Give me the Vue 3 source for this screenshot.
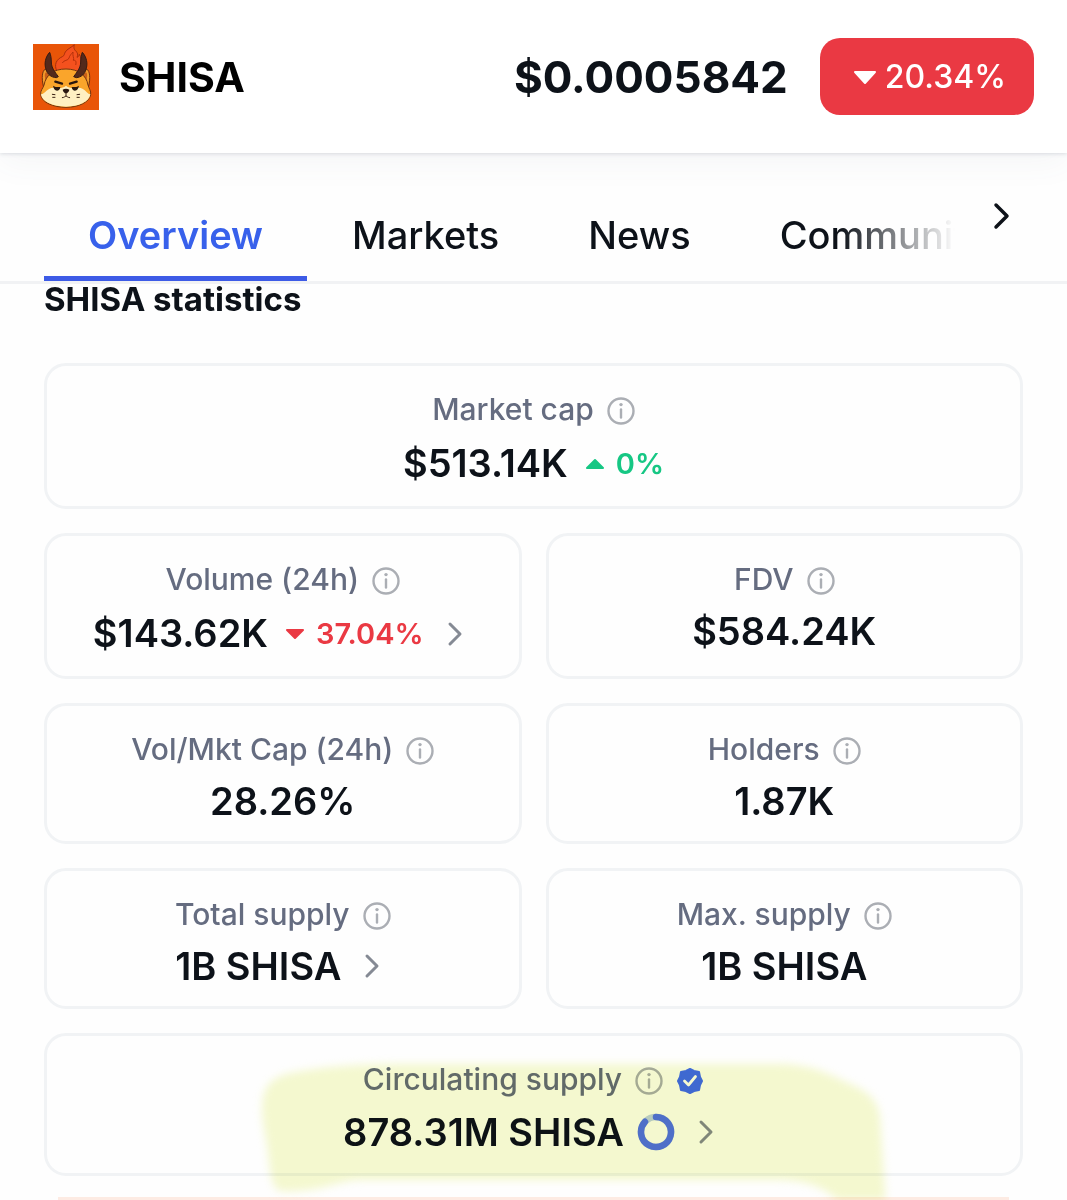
<script setup>
import { ref } from 'vue';

const activeTab = ref('Overview');

const tabs = ['Overview', 'Markets', 'News', 'Community'];

const stats = ref([
  { label: 'Market cap', value: '$513.14K', trend: 'up', change: '0%', wide: true },
  { label: 'Volume (24h)', value: '$143.62K', trend: 'down', change: '37.04%', more: true },
  { label: 'FDV', value: '$584.24K' },
  { label: 'Vol/Mkt Cap (24h)', value: '28.26%' },
  { label: 'Holders', value: '1.87K' },
  { label: 'Total supply', value: '1B SHISA', more: true },
  { label: 'Max. supply', value: '1B SHISA' },
  { label: 'Circulating supply', value: '878.31M SHISA', wide: true, verified: true, ring: true, marked: true, more: true }
]);

const selectTab = (tab) => {
  activeTab.value = tab;
};
</script>

<template>
  <div class="page">
    <header class="coin-header">
      <svg class="coin-logo" viewBox="0 0 198 198" aria-hidden="true">
        <rect width="198" height="198" fill="#e95508" />
        <path d="M72 82C62 62 70 46 88 38c8-4 5-9 9-14 4-8 16-12 27-22-4 12 2 17 8 23 4 7 1 11 0 15 5-2 6-5 7-9 10 17 8 36-1 54z" fill="#f4511e" stroke="#a92d0c" stroke-width="3" />
        <path d="M88 57c4-10 18-6 20-15 2-8 7-12 12-18-2 12 4 17 1 25 9-2 9 7 7 14" fill="none" stroke="#b5310b" stroke-width="3" />
        <path d="M31 126c-6-24-3-46 5-50 10-1 17 10 23 17zM167 126c6-24 3-46-5-50-10-1-17 10-23 17z" fill="#f39a2c" stroke="#70330f" stroke-width="3" />
        <path d="M38 110c-4-15-3-22 1-25 5 2 9 8 13 13zM160 110c4-15 3-22-1-25-5 2-9 8-13 13z" fill="#c95f18" />
        <path d="M99 75c36 0 61 18 66 48 2 10 10 17 8 29-4 23-37 38-74 38s-73-14-76-38c-2-12 8-20 10-29 6-31 29-48 66-48z" fill="#faa52b" stroke="#70330f" stroke-width="3" />
        <path d="M24 151c14-2 18-20 38-20 16 0 24 4 37-6 13 10 21 6 37 6 20 0 24 18 36 20-3 23-36 37-73 37s-72-14-75-37z" fill="#fff0c2" />
        <path d="M76 98C66 84 55 72 55 54c0-12-2-22-5-29-13 14-17 34-11 51 4 15 15 24 31 25zM122 98c10-14 21-26 21-44 0-12 2-22 5-29 13 14 17 34 11 51-4 15-15 24-29 25z" fill="#53291b" stroke="#351a13" stroke-width="3" />
        <path d="M67 113l20 6M131 113l-20 6" stroke="#29170f" stroke-width="7" stroke-linecap="round" />
        <path d="M60 125c8 5 15 4 22 4-1 8-5 11-10 11-7 0-10-7-12-15zM138 125c-8 5-15 4-22 4 1 8 5 11 10 11 7 0 10-7 12-15z" fill="#28180f" />
        <path d="M89 137c6-4 14-4 20 0-1 6-6 11-10 11s-9-5-10-11z" fill="#29170f" />
        <path d="M99 147v10M88 161c5 0 8-4 11-5 3 1 6 5 11 5M58 151l8 1M59 160h7M132 152l8-1M132 160h7" fill="none" stroke="#3a2013" stroke-width="3" stroke-linecap="round" />
      </svg>
      <h1 class="coin-name">SHISA</h1>
      <span class="coin-price">$0.0005842</span>
      <span class="change-badge">
        <svg width="24" height="16" viewBox="0 0 24 16" aria-hidden="true">
          <path d="M2 3h20L12 14z" fill="currentColor" stroke="currentColor" stroke-width="2" stroke-linejoin="round" />
        </svg>
        20.34%
      </span>
    </header>

    <nav class="tab-bar">
      <div class="tab-scroll">
        <button
          v-for="tab in tabs"
          :key="tab"
          type="button"
          class="tab"
          :class="{ active: activeTab === tab }"
          @click="selectTab(tab)"
        >
          {{ tab }}
        </button>
      </div>
      <button type="button" class="tab-next" aria-label="Next">
        <svg width="36" height="36" viewBox="0 0 36 36" fill="none" stroke="currentColor" stroke-width="3.500" stroke-linecap="round" stroke-linejoin="round">
          <path d="M13 7l11 11-11 11"></path>
        </svg>
      </button>
    </nav>

    <main class="content">
      <h2 class="section-title">SHISA statistics</h2>

      <div class="stats-grid">
        <section
          v-for="item in stats"
          :key="item.label"
          class="stat-card"
          :class="{ wide: item.wide }"
        >
          <div class="stat-label">
            <span>{{ item.label }}</span>
            <button type="button" class="icon-button info" :aria-label="item.label">
              <svg width="28" height="28" viewBox="0 0 28 28" fill="none" stroke="currentColor" stroke-width="2.400">
                <circle cx="14" cy="14" r="12.5"></circle>
                <path d="M14 12.5v8" stroke-linecap="round"></path>
                <circle cx="14" cy="7.6" r="1.7" fill="currentColor" stroke="none"></circle>
              </svg>
            </button>
            <svg v-if="item.verified" class="verified" width="28" height="28" viewBox="0 0 28 28" aria-hidden="true">
              <path d="M14 2l4 2 5 1 1 5 2 4-2 4-1 5-5 1-4 2-4-2-5-1-1-5-2-4 2-4 1-5 5-1z" fill="currentColor" stroke="currentColor" stroke-width="2" stroke-linejoin="round" />
              <path d="M8.500 14l4 4 7-8.500" fill="none" stroke="#fff" stroke-width="2.800" stroke-linecap="round" stroke-linejoin="round" />
            </svg>
          </div>

          <div class="stat-value" :class="{ 'with-trend': item.trend, 'with-ring': item.ring }">
            <span>{{ item.value }}</span>
            <span v-if="item.trend" class="trend" :class="item.trend">
              <svg width="20" height="12" viewBox="0 0 20 12" aria-hidden="true">
                <path :d="item.trend === 'up' ? 'M2 10h16l-8-8z' : 'M2 2h16l-8 8z'" fill="currentColor" stroke="currentColor" stroke-width="2" stroke-linejoin="round" />
              </svg>
              {{ item.change }}
            </span>
            <svg v-if="item.ring" class="ring" width="38" height="38" viewBox="0 0 38 38" fill="none" stroke-width="6.500" aria-hidden="true">
              <circle cx="19" cy="19" r="15" stroke="#bfd0e8"></circle>
              <path d="M19 4A15 15 0 1 1 8 8.800" stroke="currentColor" stroke-linecap="round"></path>
            </svg>
            <button v-if="item.more" type="button" class="icon-button more" :aria-label="item.value">
              <svg width="36" height="36" viewBox="0 0 36 36" fill="none" stroke="currentColor" stroke-width="3" stroke-linecap="round" stroke-linejoin="round">
                <path d="M13 8l10 10-10 10"></path>
              </svg>
            </button>
          </div>

          <svg v-if="item.marked" class="marker" viewBox="0 0 640 150" preserveAspectRatio="none" aria-hidden="true">
            <path d="M11 60C11 36 20 26 45 22c25-5 60-8 100-8h380c30 0 48 8 68 18 22 9 32 18 34 36l6 90h-43c-8-14-28-28-65-28H105c-20 2-40 13-76 11-10-3-10-24-13-45-2-12-5-24-5-36z" />
          </svg>
        </section>
      </div>

      <div class="notice"></div>
    </main>
  </div>
</template>

<style>
body {
  margin: 0;
  background: #fff;
}
</style>

<style scoped>
.page {
  font-family: Inter, 'Liberation Sans', sans-serif;
  color: #0d1219;
  background: #fefefe;
  overflow: hidden;
}

button {
  font: inherit;
  color: inherit;
  background: none;
  border: none;
  padding: 0;
  cursor: pointer;
}

svg {
  display: block;
  flex-shrink: 0;
}

.coin-header {
  display: flex;
  align-items: center;
  padding: 38px 33px;
  background: #fff;
  box-shadow: 0 1px 4px rgba(88, 102, 126, 0.2), 0 8px 32px rgba(88, 102, 126, 0.06);
  position: relative;
}

.coin-logo {
  width: 66px;
  height: 66px;
}

.coin-name {
  flex: 1;
  margin: 0 0 0 20px;
  font-size: 41px;
  font-weight: 700;
  color: #000;
}

.coin-price {
  font-size: 44px;
  font-weight: 700;
}

.change-badge {
  display: flex;
  align-items: center;
  gap: 8px;
  margin-left: 32px;
  padding: 0 28px 0 33px;
  line-height: 77px;
  border-radius: 20px;
  background: #ea3943;
  color: #fff;
  font-size: 32px;
  font-weight: 500;
}

.tab-bar {
  display: flex;
  align-items: flex-start;
  padding-left: 44px;
  border-bottom: 3px solid #f1f2f4;
}

.tab-scroll {
  flex: 1;
  min-width: 0;
  display: flex;
  gap: 1px;
  overflow: hidden;
  mask-image: linear-gradient(to right, #000 calc(100% - 115px), transparent);
}

.tab {
  padding: 50px 44px 9px;
  line-height: 64px;
  border-bottom: 5px solid transparent;
  font-size: 38px;
  font-weight: 500;
}

.tab.active {
  color: #3861eb;
  border-bottom-color: #3d5be6;
  font-weight: 600;
}

.tab-next {
  margin: 45px 48px 0 28px;
}

.content {
  padding: 0 44px;
}

.section-title {
  margin: 0 0 49px;
  font-size: 33px;
  line-height: 30px;
  font-weight: 700;
}

.stats-grid {
  display: grid;
  grid-template-columns: 1fr 1fr;
  gap: 24px;
}

.stat-card {
  position: relative;
  padding: 25px 12px 12px;
  border: 3px solid #f1f3f5;
  border-radius: 22px;
}

.stat-card.wide {
  grid-column: 1 / -1;
}

.stat-label {
  display: flex;
  justify-content: center;
  align-items: center;
  gap: 13px;
  margin-bottom: 6px;
  font-size: 30px;
  line-height: 36px;
  font-weight: 500;
  color: #656c80;
}

.stat-value {
  display: flex;
  justify-content: center;
  align-items: center;
  gap: 13px;
  font-size: 38px;
  line-height: 56px;
  font-weight: 600;
}

.stat-value.with-trend {
  line-height: 61px;
}

.stat-value.with-ring {
  line-height: 58px;
}

.trend {
  display: flex;
  align-items: center;
  gap: 11px;
  margin-left: 4px;
  font-size: 29px;
}

.trend.up {
  color: #16c784;
}

.trend.down {
  color: #ea3943;
}

.info,
.verified {
  margin-top: 3px;
}

.info {
  color: #abaeb4;
}

.verified {
  color: #416bff;
}

.ring {
  color: #5272f6;
}

.more {
  color: #858a94;
}

/* highlighter stroke over the card */
.marker {
  position: absolute;
  left: 21%;
  top: 14px;
  width: 66%;
  height: 150px;
  fill: #f5f9d0;
  filter: blur(4px);
  mix-blend-mode: multiply;
  pointer-events: none;
}

.notice {
  height: 3px;
  margin: 21px 14px 0;
  background: #fdebe3;
}
</style>
